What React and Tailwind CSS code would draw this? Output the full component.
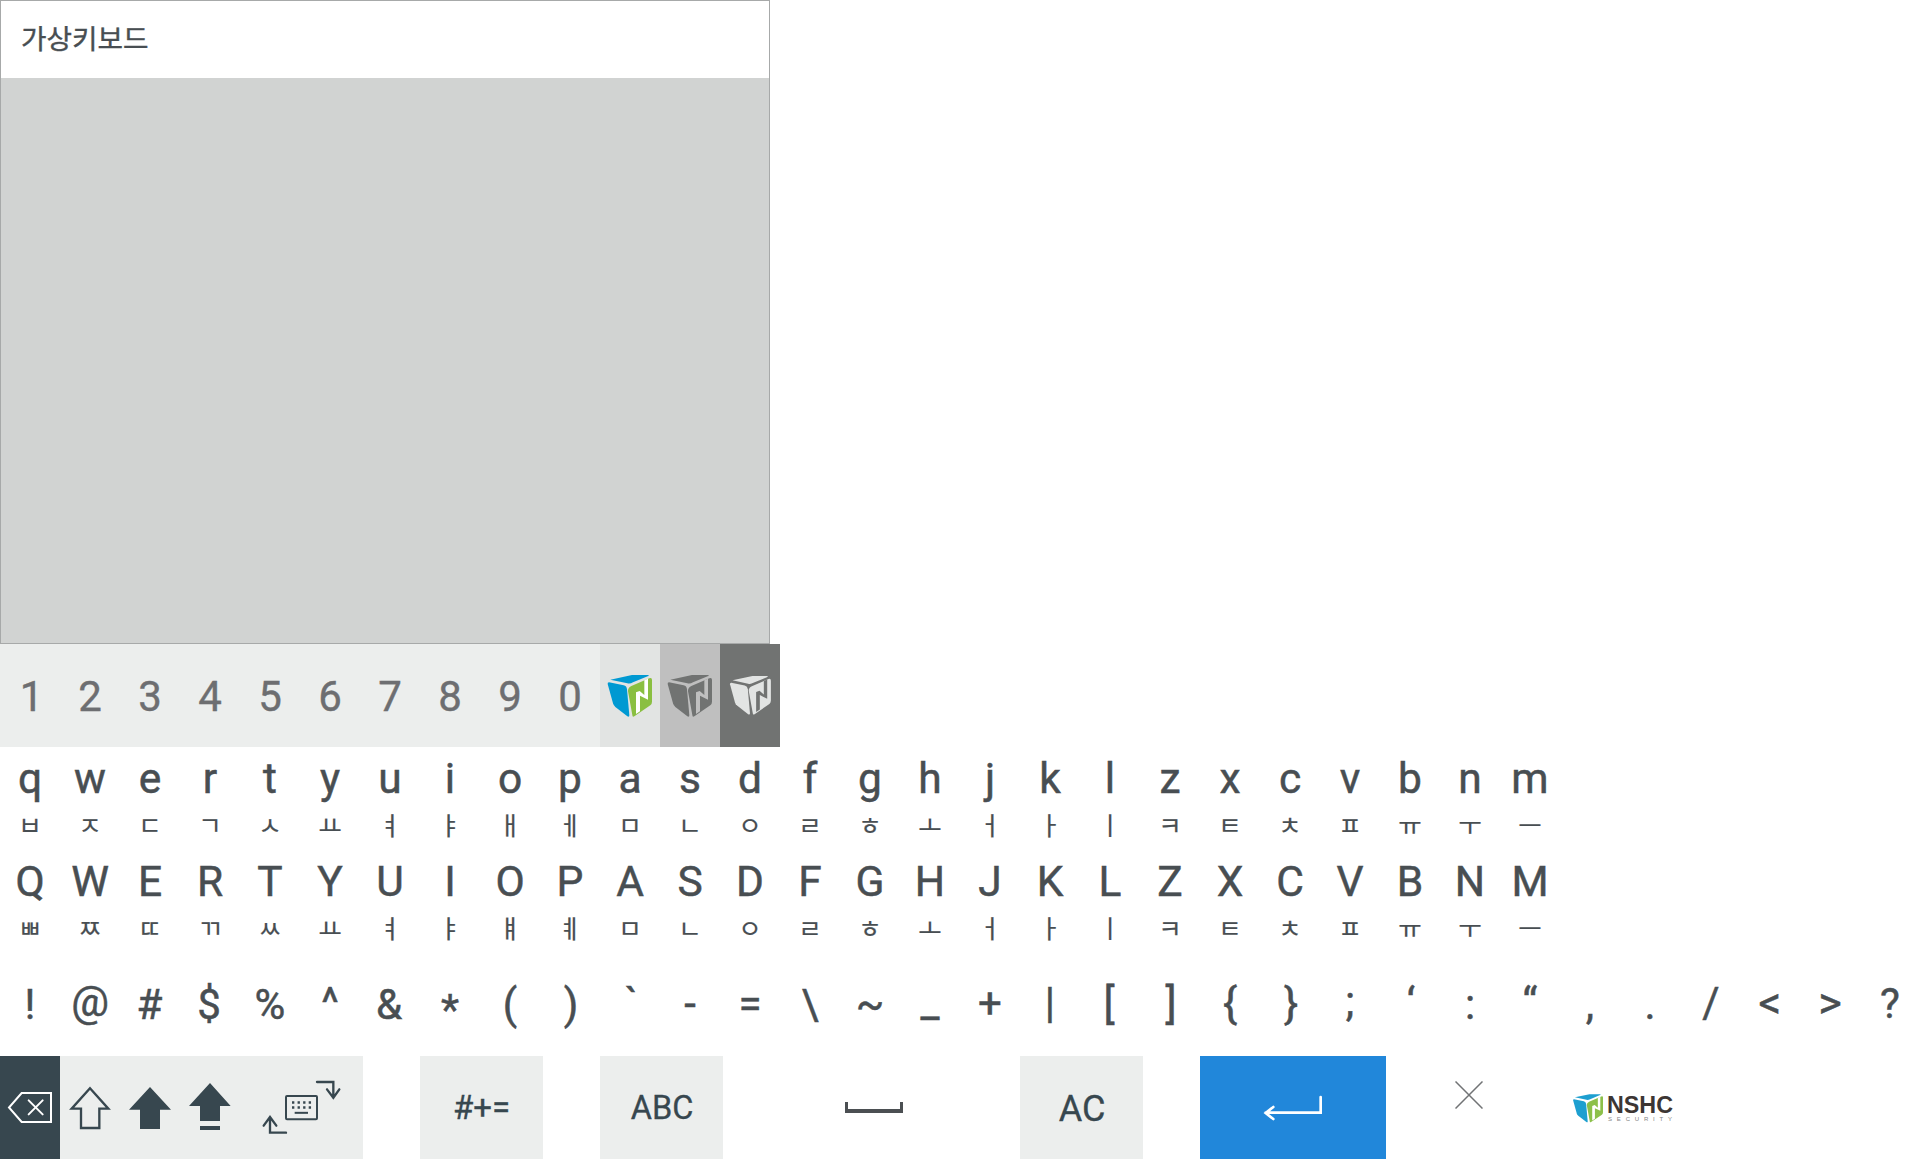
import React from "react";

const LATIN = "font-['Roboto','Liberation_Sans',sans-serif]";
const LOWER = [..."qwertyuiopasdfghjklzxcvbnm"];
const LOWER_JAMO = [..."ㅂㅈㄷㄱㅅㅛㅕㅑㅐㅔㅁㄴㅇㄹㅎㅗㅓㅏㅣㅋㅌㅊㅍㅠㅜㅡ"];
const UPPER_JAMO = [..."ㅃㅉㄸㄲㅆㅛㅕㅑㅒㅖㅁㄴㅇㄹㅎㅗㅓㅏㅣㅋㅌㅊㅍㅠㅜㅡ"];
const DIGITS = [..."1234567890"];
const SYMBOLS = [..."!@#$%^&*()`-=\\~_+|[]{};‘:“,./<>?"];

const SYMBOL_STYLE = {
  "@": "pb-[6px]",
  "#": "pb-[1px] pr-[1px]",
  "$": "pb-[1px] pr-[2px]",
  "&": "pb-[1px] pr-[2px]",
  "^": "pb-[4px]",
  "*": "pt-[9px]",
  ")": "pl-[2px]",
  "`": "pb-[3px] pl-[3px]",
  "-": "pb-[3px]",
  "=": "pb-[3px]",
  "~": "pb-[2px]",
  "_": "pb-[5px]",
  "+": "pb-[3px]",
  "|": "pb-[5px]",
  "[": "pb-[3px] pr-[2px]",
  "]": "pb-[3px] pl-[2px]",
  "{": "pb-[2px]",
  "}": "pb-[2px] pl-[2px]",
  ";": "pb-[6px]",
  "‘": "pb-[5px] pl-[2px]",
  "“": "pb-[5px]",
  "<": "pb-[3px] text-[45px]",
  ">": "pb-[3px] text-[45px]",
  "?": "pb-[2px]",
  "/": "pb-[4px] pl-[2px]",
};

function Cube({ blue, green, slot }) {
  return (
    <>
      <path fill={blue} d="M61 149 L126 135 L173 135 Q180 136 173 139 L129 157 Q121 162 112 160 Z" />
      <path fill={blue} d="M57 157 L101 166 Q110 168 111 178 L118 256 Q118 262 112 259 L76 231 Q71 227 69 220 L53 162 Q52 157 57 157 Z" />
      <path fill={green} d="M124 168 L178 145 Q186 142 186 150 L186 215 Q186 222 181 226 L133 259 Q127 262 127 255 L114 184 Q113 173 124 168 Z" />
      <path fill={slot} d="M138 187 L149 183 L163 195 L163 151 L174 146 L174 209 L150 197 L150 244 L138 252 Z" />
    </>
  );
}

function CubeKey({ className, transform, ...colors }) {
  return (
    <div className={className}>
      <svg width="60" height="103" viewBox="0 0 60 103">
        <g transform={transform}>
          <Cube {...colors} />
        </g>
      </svg>
    </div>
  );
}

function LetterRow({ letters, jamo }) {
  return (
    <div className="flex h-[103px] text-[#484e52]">
      {letters.map((c, i) => (
        <div key={c} className="flex w-[60px] flex-col items-center">
          <span className={`${LATIN} mt-[4px] h-[56px] text-[42.500px] leading-[56px] [-webkit-text-stroke:0.5px_#484e52]`}>{c}</span>
          <span className="mt-[1px] h-[32px] font-['Noto_Sans_CJK_KR',sans-serif] text-[25.5px] font-normal leading-[32px] [-webkit-text-stroke:0.2px_#484e52]">{jamo[i]}</span>
        </div>
      ))}
    </div>
  );
}

export default function App() {
  return (
    <div className="h-[1159px] w-[1920px] overflow-hidden bg-white">
      <div className="flex h-[644px] w-[770px] flex-col border border-[#a7a9a9] bg-[#d1d3d2]">
        <div className="flex h-[77px] items-center bg-white pb-[4px] pl-[20px] font-['Noto_Sans_CJK_KR',sans-serif] text-[27.700px] text-[#484e52] [-webkit-text-stroke:0.4px_#484e52]">
          가상키보드
        </div>
      </div>

      <div className="flex h-[103px]">
        {DIGITS.map((d) => (
          <div
            key={d}
            className={`${LATIN} flex w-[60px] items-center justify-center bg-[#eceeed] pt-[1px] text-[42px] text-[#6d6e71] [-webkit-text-stroke:0.4px_#6d6e71] ${d === "1" ? "pl-[3px]" : ""}`}
          >
            {d}
          </div>
        ))}
        <CubeKey className="w-[60px] bg-[#e2e4e3]" transform="translate(-10 -14) scale(.33333)" blue="#0099d2" green="#8abf41" slot="#ffffff" />
        <CubeKey className="w-[60px] bg-[#bfbfbf]" transform="translate(-10 -14) scale(.33333)" blue="#717372" green="#717372" slot="#bfbfbf" />
        <CubeKey className="w-[60px] bg-[#717372]" transform="translate(-6.3 -9.5) scale(.3075)" blue="#e2e4e3" green="#e2e4e3" slot="#717372" />
      </div>

      <LetterRow letters={LOWER} jamo={LOWER_JAMO} />
      <LetterRow letters={LOWER.map((c) => c.toUpperCase())} jamo={UPPER_JAMO} />

      <div className={`${LATIN} flex h-[103px] text-[42px] text-[#484e52] [-webkit-text-stroke:0.5px_#484e52]`}>
        {SYMBOLS.map((c) => (
          <div key={c} className={`flex w-[60px] shrink-0 items-center justify-center ${SYMBOL_STYLE[c] || ""}`}>
            {c}
          </div>
        ))}
      </div>

      <div className={`${LATIN} flex h-[103px] text-[#37474f] [-webkit-text-stroke:0.3px_#37474f]`}>
        <div className="w-[60px] bg-[#37474f]">
          <svg width="60" height="103" viewBox="0 0 180 309" fill="none" stroke="#fff" strokeWidth="6">
            <path d="M65 111 H153 V198 H65 L27 154.500 Z" />
            <path d="M86 133 L128 175 M128 133 L86 175" strokeLinecap="round" />
          </svg>
        </div>
        <div className="w-[303px] bg-[#eceeed]">
          <svg width="303" height="103" viewBox="180 48 909 309" fill="none" stroke="#37474f" strokeWidth="7">
            <path d="M270 145 L325 206 H298 V264 H243 V206 H215 Z" />
            <path d="M450 141 L513 209 H480 V267 H420 V209 H387 Z" fill="#37474f" stroke="none" />
            <path d="M630 129 L692 198 H660 V243 H600 V198 H567 Z M600 258 H660 V270 H600 Z" fill="#37474f" stroke="none" />
            <rect x="858" y="168" width="93" height="70" rx="3" strokeWidth="6" />
            <path d="M876 187.500 H936 M876 202.500 H936" strokeWidth="8" strokeDasharray="7 9.700" />
            <path d="M884 218.500 H924" strokeWidth="6" />
            <g strokeLinecap="round">
              <path d="M951 126 H1000 V173 M981 148 L1000 173 L1018 148" />
              <path d="M858 278 H810 V232 M791 257 L810 231 L829 257" />
            </g>
          </svg>
        </div>
        <div className="ml-[57px] flex w-[123px] items-center justify-center bg-[#eceeed] pt-[1px] text-[33px]">#+=</div>
        <div className="ml-[57px] flex w-[123px] items-center justify-center bg-[#eceeed] pl-[1px] pt-[1px] text-[32.500px]">ABC</div>
        <div className="ml-[122px] mt-[46px] h-[11px] w-[58px] border-x-[3px] border-b-[4px] border-[#4b4f52]" />
        <div className="ml-[117px] flex w-[123px] items-center justify-center bg-[#eceeed] pl-[1px] pt-[3px] text-[36px]">AC</div>
        <div className="ml-[57px] w-[186px] bg-[#2187da]">
          <svg width="186" height="103" viewBox="600 48 558 309" fill="none" stroke="#fff" strokeWidth="8" strokeLinecap="round">
            <path d="M962 171 V218 H797 M820 201 L797 219 L820 237" />
          </svg>
        </div>
        <svg className="ml-[69px] mt-[25px]" width="28" height="28" viewBox="0 0 28 28" fill="none" stroke="#717375" strokeWidth="1.500">
          <path d="M.5 .5 L27.500 27.500 M27.500 .5 L.5 27.500" />
        </svg>
        <svg className="ml-[90px] mt-[38px]" width="31" height="29" viewBox="53 134 137 129">
          <Cube blue="#1d9fd0" green="#8cc04a" slot="#ffffff" />
        </svg>
        <svg className="ml-[3px] mt-[38px] overflow-visible [-webkit-text-stroke:0]" width="66" height="30" viewBox="0 0 66 30">
          <text x="0" y="18.500" fontFamily="Liberation Sans" fontWeight="700" fontSize="23.5" fill="#3c3634" textLength="66" lengthAdjust="spacingAndGlyphs">NSHC</text>
          <text x="1" y="26.500" fontFamily="Liberation Sans" fontSize="6" fill="#858585" textLength="64" lengthAdjust="spacing">SECURITY</text>
        </svg>
      </div>
    </div>
  );
}
